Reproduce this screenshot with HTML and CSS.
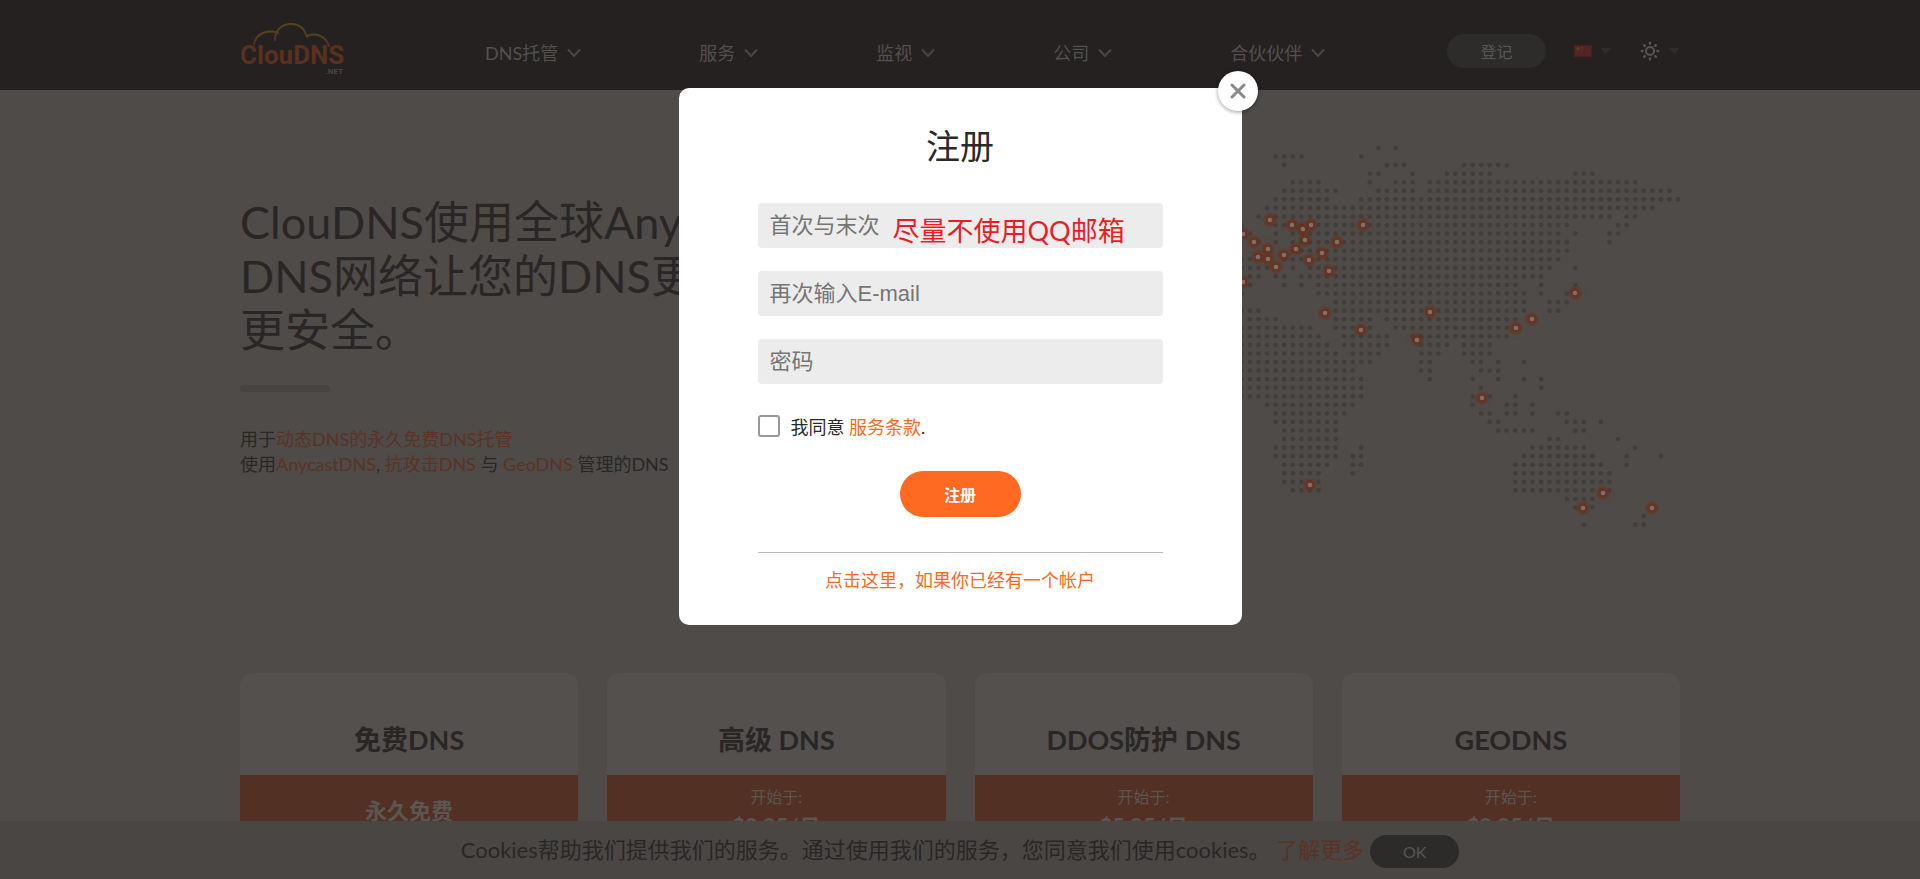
FILE: index.html
```html
<!DOCTYPE html>
<html lang="zh-CN">
<head>
<meta charset="utf-8">
<meta name="viewport" content="width=device-width, initial-scale=1">
<title>ClouDNS 注册</title>
<link rel="stylesheet" href="styles.css">
</head>
<body>
<svg class="sprite" aria-hidden="true">
  <symbol id="chevron" viewBox="0 0 16 12"><path d="M2 2.5 L8 9 L14 2.5" fill="none" stroke="currentColor" stroke-width="2.2"/></symbol>
  <symbol id="caret" viewBox="0 0 12 6"><path d="M0 0 H12 L6 6 Z" fill="currentColor"/></symbol>
</svg>

<header class="header">
  <div class="container header-row">
    <a class="logo" href="#" aria-label="ClouDNS.net">
      <svg viewBox="0 0 106 60" width="106" height="60">
        <defs><linearGradient id="cloud" x1="0" y1="0" x2="0" y2="1"><stop offset="0" stop-color="#574320"/><stop offset="1" stop-color="#563021"/></linearGradient></defs>
        <g fill="none" stroke="url(#cloud)" stroke-width="2" stroke-linecap="round">
          <path d="M14 22 C16 12 26 7 38 11"/>
          <path d="M35 18 C35 8 42 2 51 2 C60 2 65 8 67 15"/>
          <path d="M67 14 C77 10 86 15 89 24"/>
        </g>
        <text class="logo-name" x="0" y="42">ClouDNS</text>
        <text class="logo-net" x="103" y="52" text-anchor="end">.NET</text>
      </svg>
    </a>
    <nav class="nav">
      <a href="#">DNS托管 <svg class="chevron"><use href="#chevron"/></svg></a>
      <a href="#">服务 <svg class="chevron"><use href="#chevron"/></svg></a>
      <a href="#">监视 <svg class="chevron"><use href="#chevron"/></svg></a>
      <a href="#">公司 <svg class="chevron"><use href="#chevron"/></svg></a>
      <a href="#">合伙伙伴 <svg class="chevron"><use href="#chevron"/></svg></a>
    </nav>
    <div class="tools">
      <button class="signin" type="button">登记</button>
      <button class="tool" type="button" aria-label="语言">
        <svg width="18" height="12" viewBox="0 0 18 12"><rect width="18" height="12" fill="#4b1f1f"/><rect x="1" y="1" width="16" height="10" fill="#552422"/><circle cx="4" cy="3.6" r="1.8" fill="#56401f"/><path d="M7 1.5h1.5v1.5h-1.5zM8 3.5h1v1.5h-1zM6.5 5h1.2v1h-1.2z" fill="#56401f"/></svg>
        <svg class="caret"><use href="#caret"/></svg>
      </button>
      <button class="tool" type="button" aria-label="主题">
        <svg width="20" height="20" viewBox="0 0 20 20" fill="none" stroke="#5a5553" stroke-width="2"><circle cx="10" cy="10" r="4"/><path stroke-linecap="round" stroke-width="2.4" d="M10 1.8V2.6M10 17.4v.8M1.8 10H2.6M17.4 10h.8M4.2 4.2l.6.6M15.2 15.2l.6.6M4.2 15.8l.6-.6M15.2 4.8l.6-.6"/></svg>
        <svg class="caret"><use href="#caret"/></svg>
      </button>
    </div>
  </div>
</header>

<main class="container">
  <section class="hero">
    <div class="hero-text">
      <h1>ClouDNS使用全球Anycast<br>DNS网络让您的DNS更快，<br>更安全。</h1>
      <div class="bar"></div>
      <p>用于<a href="#">动态DNS的永久免费DNS托管</a><br>使用<a href="#">AnycastDNS</a>, <a href="#">抗攻击DNS</a> 与 <a href="#">GeoDNS</a> 管理的DNS</p>
    </div>
    <svg class="map" id="map" viewBox="0 0 450 400" width="450" height="400" role="img" aria-label="服务器位置"></svg>
  </section>
  <section class="plans">
    <article class="plan"><h2>免费DNS</h2><div class="price"><strong>永久免费</strong></div></article>
    <article class="plan"><h2>高级 DNS</h2><div class="price"><span>开始于:</span><strong>$2.95/月</strong></div></article>
    <article class="plan"><h2>DDOS防护 DNS</h2><div class="price"><span>开始于:</span><strong>$5.95/月</strong></div></article>
    <article class="plan"><h2>GEODNS</h2><div class="price"><span>开始于:</span><strong>$9.95/月</strong></div></article>
  </section>
</main>

<aside class="cookies">
  <span>Cookies帮助我们提供我们的服务。通过使用我们的服务，您同意我们使用cookies。 <a href="#">了解更多</a></span>
  <button type="button">OK</button>
</aside>

<div class="overlay">
  <div class="dialog" role="dialog" aria-labelledby="dialog-title">
    <button class="close" type="button" aria-label="关闭"><svg width="16" height="16" viewBox="0 0 16 16"><path d="M2 2 L14 14 M14 2 L2 14" stroke="#888" stroke-width="3" stroke-linecap="round"/></svg></button>
    <h2 id="dialog-title">注册</h2>
    <form class="form">
      <div class="field">
        <input type="text" placeholder="首次与末次" aria-label="首次与末次">
        <span class="note">尽量不使用QQ邮箱</span>
      </div>
      <input type="email" placeholder="再次输入E-mail" aria-label="再次输入E-mail">
      <input type="password" placeholder="密码" aria-label="密码">
      <div class="agree"><input type="checkbox" id="agree"><label for="agree">我同意 <a href="#">服务条款</a>.</label></div>
      <button class="submit" type="submit">注册</button>
    </form>
    <div class="login"><a href="#">点击这里，如果你已经有一个帐户</a></div>
  </div>
</div>
<script src="map.js"></script>
</body>
</html>
```
FILE: styles.css
```css
* { box-sizing: border-box; }
body {
  margin: 0;
  height: 100vh;
  overflow: hidden;
  background: #4f4b49;
  color: #2a2625;
  font-family: Lato, "Noto Sans CJK SC", sans-serif;
  font-size: 18px;
}
a { color: #5a3324; text-decoration: none; }
button { border: 0; padding: 0; font-family: inherit; cursor: pointer; }
.sprite { display: none; }
.container { width: 75%; margin: 0 auto; }

.header { background: #252120; height: 90px; }
.header-row { display: flex; height: 100%; }
.logo { padding-top: 22px; }
.logo-name { font: bold 26px Roboto, sans-serif; fill: #5a3020; }
.logo-net { font: bold 8px Roboto, sans-serif; fill: #4a4644; }
.nav { display: flex; align-items: flex-start; gap: 117px; margin-left: 139px; padding-top: 40px; line-height: 26px; }
.nav a { display: flex; align-items: center; gap: 8px; color: #53504e; }
.chevron { width: 16px; height: 12px; color: #494543; }
.tools { display: flex; align-items: center; margin-left: auto; padding-top: 12px; }
.signin { width: 99px; height: 34px; border-radius: 17px; background: #2e2b2b; color: #5a5654; font-size: 16px; }
.tool { display: flex; align-items: center; gap: 8px; background: none; margin-left: 28px; }
.caret { width: 12px; height: 6px; color: #302c2b; }

.hero { display: flex; justify-content: space-between; height: 583px; }
.hero-text { padding-top: 105px; }
h1 { margin: 0; font-weight: 400; font-size: 45px; line-height: 54px; white-space: nowrap; }
.bar { width: 90px; height: 7px; border-radius: 4px; background: #474341; margin: 28px 0 35px; }
.hero-text p { margin: 0; line-height: 25px; white-space: nowrap; }
.map { margin-top: 40px; overflow: visible; }
.dot { fill: #413d3b; }
.glow { fill: url(#glow); }
.pin { fill: #7d716d; }
.ring { fill: none; stroke: #5a3f38; stroke-width: 1; opacity: .5; }

.plans { display: grid; grid-template-columns: repeat(4, 1fr); gap: 29px; }
.plan { border-radius: 12px; background: #53504e; overflow: hidden; text-align: center; }
.plan h2 { margin: 0; padding: 50px 0 18px; font-size: 27px; line-height: 34px; }
.price { display: flex; flex-direction: column; justify-content: center; height: 110px; padding-bottom: 38px; background: #533024; color: #5a5654; }
.price span { padding-top: 8px; font-size: 16px; line-height: 24px; }
.price strong { font-size: 22px; line-height: 36px; }

.cookies {
  position: fixed; left: 0; right: 0; bottom: 0;
  display: flex; align-items: center; justify-content: center; gap: 6px;
  height: 58px; background: #4a4644; font-size: 22px;
}
.cookies span { padding-bottom: 4px; }
.cookies button { width: 89px; height: 33px; margin-top: 3px; border-radius: 17px; background: #2d2a2a; color: #5a5654; font-size: 16px; }

.overlay { position: fixed; inset: 0; display: flex; justify-content: center; align-items: flex-start; padding-top: 88px; }
.dialog { position: relative; width: 563px; padding: 32px 79px 31px; border-radius: 10px; background: #fff; color: #2a2a2a; }
.dialog a { color: #ff6a22; }
.dialog h2 { margin: 0 0 32px; font-weight: 400; font-size: 34px; line-height: 51px; text-align: center; }
.close {
  position: absolute; top: -17px; right: -16px;
  display: flex; align-items: center; justify-content: center;
  width: 40px; height: 40px; border-radius: 50%; background: #fff;
  box-shadow: 0 1px 4px rgba(0, 0, 0, .4);
}
.form { display: flex; flex-direction: column; gap: 23px; }
.field { position: relative; }
.form input:not([type="checkbox"]) {
  display: block; width: 100%; height: 45px; padding: 0 12px; border: 0; border-radius: 4px;
  background: #ececec; font: 22px "Liberation Sans", "Noto Sans CJK SC", sans-serif;
}
.form input::placeholder { color: #757575; opacity: 1; }
.note { position: absolute; left: 135px; top: 8px; color: #ed1c24; font-size: 27px; line-height: 40px; white-space: nowrap; }
.agree { display: flex; align-items: center; gap: 11px; height: 26px; margin-top: 6px; }
.agree input { appearance: none; width: 22px; height: 22px; margin: 0; border: 2px solid #999; border-radius: 3px; }
.submit { align-self: center; width: 121px; height: 46px; margin-top: 9px; border-radius: 23px; background: #ff6a22; color: #fff; font-size: 16px; font-weight: 700; }
.login { margin-top: 35px; padding-top: 13px; border-top: 1px solid #bbb; text-align: center; line-height: 28px; }
```
FILE: map.js
```js
// Land cells of the dotted map: one entry per row, as column ranges.
const rows = [
  "15 17", "3-6 13", "4 16-18 25-30", "14 15 19 23-28 38-40", "5-8 14 17-19 21-45",
  "4-10 15-19 21-49", "3-9 13-50", "2-47", "1 3-42 44 45", "-1 3-37 43 44",
  "0 3 5-36 38 42 43", "1 3 5-37 42", "2 5-37", "-1 0 2 4-36", "-1-3 5 7-35 38",
  "0 1 3 4 6-34", "0 4 6 8-31 34 38", "-1 8-32 34 37", "10-32 35-37", "-1-1 10-32 35 36",
  "0-3 10-14 16-31", "-1-7 10-14 17-30", "-1-8 11-16 19-30", "-1-9 11-16 20-23 25-28",
  "-1-10 12-15 20-22 25-28", "-1-14 20 21 26 27 29 32", "-1-12 20 21 27-29",
  "-1-13 21 26 29 32 34", "-1-13 27 34", "-1-13 26 28 31", "2-12 26 30 31 33",
  "3-11 27 28 30 31 33 36 37", "4-10 3 28 29 37-39 41", "4-10 29-33 38 39",
  "4-10 35 36 43", "3-10 13 33-39 45", "3-10 12 13 32-40 44 48", "4-9 12 13 31-41 44",
  "4-8 12 31-42", "4-8 31-42", "5-8 31-42", "37-40", "38-40", "46", "39 45 46"
];
// Server locations: x, y, 1 when a pulse ring is drawn.
const pins = [
  [40, 90], [62, 95, 1], [73, 99], [81, 95], [133, 95, 1], [13, 104], [24, 112, 1],
  [38, 119, 1], [28, 127], [38, 129], [46, 137], [54, 125], [66, 119], [75, 110],
  [79, 130], [92, 123], [107, 112], [99, 141, 1], [13, 152, 1], [95, 183], [131, 200],
  [200, 182], [187, 210, 1], [80, 355, 1], [345, 163, 1], [302, 189], [286, 198, 1],
  [252, 268, 1], [373, 363, 1], [353, 378], [422, 378]
];
let out = '<defs><radialGradient id="glow"><stop offset="0" stop-color="#6e3018"/>' +
  '<stop offset=".5" stop-color="#6a3019" stop-opacity=".8"/>' +
  '<stop offset="1" stop-color="#6a3019" stop-opacity="0"/></radialGradient></defs>';
rows.forEach((row, r) => {
  row.split(" ").forEach(part => {
    const m = part.match(/^(-?\d+)(?:-(\d+))?$/);
    const last = Number(m[2] ?? m[1]);
    for (let c = Number(m[1]); c <= last; c++) {
      out += `<circle class="dot" cx="${20 + c * 8.56}" cy="${18 + r * 8.56}" r="2.3"/>`;
    }
  });
});
pins.forEach(([x, y, ring]) => {
  if (ring) out += `<circle class="ring" cx="${x}" cy="${y}" r="11"/>`;
  out += `<circle class="glow" cx="${x}" cy="${y}" r="8"/><circle class="pin" cx="${x}" cy="${y}" r="2.3"/>`;
});
document.getElementById("map").innerHTML = out;
```
